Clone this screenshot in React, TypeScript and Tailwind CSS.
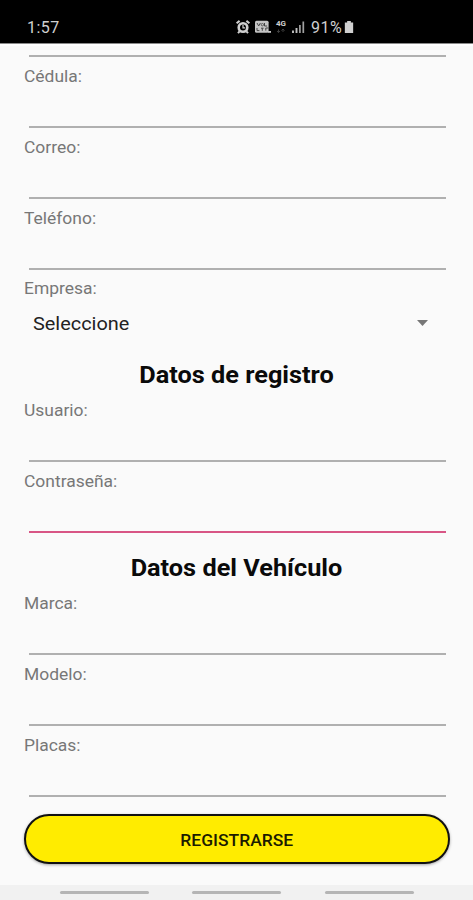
import clsx from 'clsx';

function StatusIcons() {
  return (
    <svg viewBox="0 0 72 16" className="h-4 w-[72px]" fill="none" aria-hidden="true">
      {/* alarm */}
      <g stroke="#d0d0d0">
        <circle cx="8" cy="8.5" r="4.3" strokeWidth="2.6" />
        <path d="M1.6 4.2 4.6 1.9M14.4 4.2 11.4 1.9M4.6 12.4 3 14.2M11.4 12.4 13 14.2" strokeWidth="2" />
        <path d="M8 6v2.8h2.2" strokeWidth="1.2" />
      </g>
      {/* VoLTE */}
      <rect x="20" y="1.8" width="13.6" height="12" rx="1.5" fill="#c4c4c4" />
      <path d="M33 12.9h3" stroke="#c4c4c4" strokeWidth="1.8" />
      <path d="m22 4 1.7 3 1.7-3M29.5 4v3h2.6M22 9v2.6h2.4M26 9.2h2.6M27.3 9.2v2.6M33.6 9h-2.8v2.6" stroke="#444" />
      <circle cx="27.4" cy="5.7" r="1.2" stroke="#444" strokeWidth="0.8" />
      {/* data arrows */}
      <path d="M43.5 13.5v-3M42 12l1.5 1.6L45 12M48 10v3M46.5 11.6 48 10l1.5 1.6" stroke="#444" strokeWidth="0.9" />
      {/* signal */}
      <path d="M58 14v-2.6M61.5 14V9" stroke="#c0c0c0" strokeWidth="1.9" />
      <path d="M64.9 14V6M68.3 14V2.5" stroke="#a0a0a0" strokeWidth="1.7" />
    </svg>
  );
}

function StatusBar() {
  return (
    <header className="flex h-11 shrink-0 items-start border-b border-[#8a8a8a] bg-black pl-[27px] pt-[19px] text-[#d0d0d0]">
      <span className="w-[208px] text-[16px] leading-[18px] tracking-[0.5px]">1:57</span>
      <div className="relative">
        <StatusIcons />
        <span className="absolute left-[41px] top-0 text-[8px] font-bold leading-[9px]">4G</span>
      </div>
      <span className="ml-1 text-[16px] leading-[18px] tracking-[0.5px]">91%</span>
      <svg viewBox="0 0 10 13" className="ml-0.5 mt-0.5 h-3 w-2.5" fill="#d0d0d0" aria-hidden="true">
        <path d="M3 0h4v1.5h2.5V13h-9V1.5H3z" />
      </svg>
    </header>
  );
}

const LABEL = 'block w-fit origin-left scale-x-[1.09] pt-2 text-[16px] leading-6 text-[#777]';

function Field({ label, active = false }: { label: string; active?: boolean }) {
  return (
    <div className="h-[70.8px]">
      <label className={LABEL}>{label}</label>
      <div
        className={clsx(
          'ml-[4.5px] mr-[3px] mt-[37px] h-0.5',
          active ? 'bg-[#d85585]' : 'bg-[#b0b0b0]',
        )}
      />
    </div>
  );
}

function SectionTitle({ children }: { children: string }) {
  return (
    <h2 className="h-[51px] scale-x-[1.1] pt-[21px] text-center text-[23px] font-bold leading-[30px] text-[#0a0a0a]">
      {children}
    </h2>
  );
}

export default function App() {
  return (
    <div className="flex h-[900px] w-[473px] flex-col overflow-hidden bg-[#fafafa] font-['Roboto',sans-serif]">
      <StatusBar />
      <main className="flex-1 border-t-2 border-white pl-6 pr-6">
        <div className="ml-[4.5px] mr-[3px] mt-[9px] h-0.5 bg-[#b0b0b0]" />
        <form>
          <Field label="Cédula:" />
          <Field label="Correo:" />
          <Field label="Teléfono:" />

          <div className="h-[71px]">
            <span className={LABEL}>Empresa:</span>
            <div className="mt-[5px] flex h-9 items-center justify-between pl-[9px] pr-[21px]">
              <span className="origin-left scale-x-[1.075] text-[18.5px] text-[#222]">Seleccione</span>
              <svg viewBox="0 0 11 6" className="-mt-0.5 h-1.5 w-[11px]" fill="#777" aria-hidden="true">
                <path d="M0 0h11L5.5 6z" />
              </svg>
            </div>
          </div>

          <SectionTitle>Datos de registro</SectionTitle>
          <Field label="Usuario:" />
          <Field label="Contraseña:" active />

          <SectionTitle>Datos del Vehículo</SectionTitle>
          <Field label="Marca:" />
          <Field label="Modelo:" />
          <Field label="Placas:" />

          <button
            type="button"
            className="mt-[18px] block h-[50px] w-[426px] rounded-full border-[2.5px] border-[#111] bg-[#ffec00] pt-1 text-[16px] font-medium text-[#1c1c00] shadow-[0_1px_3px_rgba(0,0,0,0.35)]"
          >
            <span className="inline-block scale-x-[1.09]">REGISTRARSE</span>
          </button>
        </form>
      </main>
      <nav className="flex h-[15px] shrink-0 justify-center gap-[43.5px] bg-[#f1f1f1] pt-1.5">
        <span className="h-[3px] w-[89px] rounded-full bg-[#b5b5b5]" />
        <span className="h-[3px] w-[89px] rounded-full bg-[#b5b5b5]" />
        <span className="h-[3px] w-[89px] rounded-full bg-[#b5b5b5]" />
      </nav>
    </div>
  );
}
